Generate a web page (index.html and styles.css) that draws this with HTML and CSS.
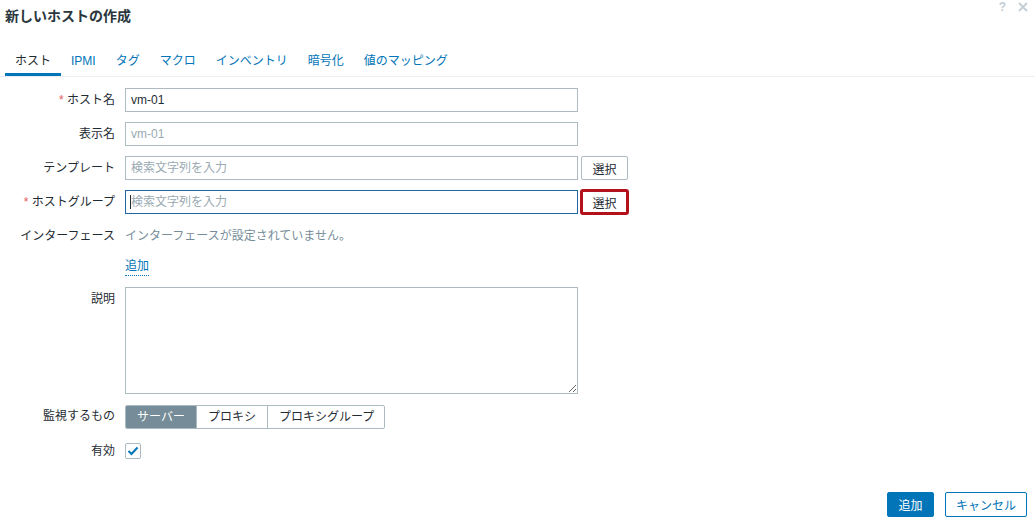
FILE: index.html
```html
<!DOCTYPE html>
<html>
<head>
    <meta charset="UTF-8">
    <title>新しいホストの作成</title>
    <link rel="stylesheet" href="styles.css">
</head>
<body>
<div class="dialog">
    <div class="dialog-head">
        <h4>新しいホストの作成</h4>
        <div class="head-icons">
            <span class="help">?</span>
            <span class="close">
                <svg width="10" height="10" viewBox="0 0 10 10"><path d="M1 1L9 9M9 1L1 9" stroke="#c3ced4" stroke-width="1.8"/></svg>
            </span>
        </div>
    </div>

    <ul class="tabs">
        <li class="active">ホスト</li>
        <li>IPMI</li>
        <li>タグ</li>
        <li>マクロ</li>
        <li>インベントリ</li>
        <li>暗号化</li>
        <li>値のマッピング</li>
    </ul>

    <div class="form">
        <label class="req">ホスト名</label>
        <div class="field"><input class="text" type="text" value="vm-01"></div>

        <label>表示名</label>
        <div class="field"><input class="text" type="text" placeholder="vm-01"></div>

        <label>テンプレート</label>
        <div class="field">
            <input class="text" type="text" placeholder="検索文字列を入力">
            <button class="btn-alt">選択</button>
        </div>

        <label class="req">ホストグループ</label>
        <div class="field">
            <div class="caret-wrap">
                <input class="text focus" type="text" placeholder="検索文字列を入力">
                <span class="caret"></span>
            </div>
            <button class="btn-alt marked">選択</button>
        </div>

        <label>インターフェース</label>
        <div class="field"><span class="muted">インターフェースが設定されていません。</span></div>

        <span></span>
        <div class="field link-row"><a class="link">追加</a></div>

        <label>説明</label>
        <div class="field"><textarea class="area"></textarea></div>

        <label>監視するもの</label>
        <div class="field">
            <div class="segments">
                <span class="seg on">サーバー</span>
                <span class="seg">プロキシ</span>
                <span class="seg">プロキシグループ</span>
            </div>
        </div>

        <label>有効</label>
        <div class="field">
            <span class="check">
                <svg width="12" height="10" viewBox="0 0 12 10"><path d="M1.5 5L4.5 8L10.5 1.5" fill="none" stroke="#0275b8" stroke-width="2"/></svg>
            </span>
        </div>
    </div>

    <div class="footer">
        <button class="btn-main">追加</button>
        <button class="btn-cancel">キャンセル</button>
    </div>
</div>
</body>
</html>
```

FILE: styles.css
```css
body {
    margin: 0;
    background: #fff;
    color: #1f2c33;
    font-family: Arial, "Liberation Sans", "Noto Sans CJK JP", sans-serif;
    font-size: 12px;
}
.dialog {
    width: 1034px;
    height: 521px;
    position: relative;
    box-sizing: border-box;
}
.dialog-head {
    display: flex;
    justify-content: space-between;
    padding: 0 5px;
}
.dialog-head h4 {
    margin: 0;
    padding-top: 8px;
    font-size: 14px;
    font-weight: bold;
    line-height: 17px;
    color: #2b373d;
}
.head-icons {
    display: flex;
    gap: 12px;
    padding-top: 1px;
    padding-right: 1px;
    color: #c3ced4;
    font-size: 12px;
    line-height: 12px;
}
.help {
    font-weight: bold;
}
.close {
    padding-top: 1px;
}
.tabs {
    list-style: none;
    margin: 26px 0 0;
    padding: 0 5px;
    display: flex;
    border-bottom: 1px solid #ebeef0;
    height: 25px;
}
.tabs li {
    padding: 0 10px;
    color: #0275b8;
    line-height: 20px;
    font-size: 12px;
}
.tabs li.active {
    color: #1f2c33;
    border-bottom: 3px solid #0275b8;
    height: 22px;
}
.form {
    display: grid;
    grid-template-columns: 115px 1fr;
    column-gap: 10px;
    row-gap: 10px;
    padding-top: 11px;
}
.form label {
    text-align: right;
    line-height: 24px;
    white-space: nowrap;
}
.form label.req::before {
    content: "* ";
    color: #e45959;
}
.field {
    display: flex;
    align-items: flex-start;
    gap: 3px;
    min-height: 24px;
    line-height: 24px;
}
.text {
    width: 453px;
    height: 24px;
    box-sizing: border-box;
    border: 1px solid #acbbc2;
    border-radius: 0;
    padding: 0 5px;
    font-family: Arial, "Liberation Sans", "Noto Sans CJK JP", sans-serif;
    font-size: 12px;
    color: #1f2c33;
    margin: 0;
    outline: none;
}
.text::placeholder {
    color: #9aaab2;
}
.text.focus {
    border-color: #1f65a6;
}
.caret-wrap {
    position: relative;
    height: 24px;
}
.caret {
    position: absolute;
    left: 5px;
    top: 5px;
    width: 1px;
    height: 14px;
    background: #1f2c33;
}
.btn-alt {
    height: 24px;
    width: 47px;
    box-sizing: border-box;
    background: #fff;
    border: 1px solid #acbbc2;
    border-radius: 2px;
    color: #1f2c33;
    font-family: Arial, "Liberation Sans", "Noto Sans CJK JP", sans-serif;
    font-size: 12px;
    padding: 0;
    margin: 0;
}
.btn-alt.marked {
    border-color: #fff;
    outline: 3px solid #b3121c;
    outline-offset: -2px;
}
.muted {
    color: #768d99;
}
.link-row {
    min-height: 19px;
    line-height: 16px;
}
.link {
    color: #0275b8;
    border-bottom: 1px dotted #0275b8;
    padding-bottom: 1px;
    cursor: pointer;
}
.area {
    width: 453px;
    height: 107px;
    box-sizing: border-box;
    border: 1px solid #acbbc2;
    margin: 0;
    resize: both;
}
.segments {
    display: flex;
    border: 1px solid #acbbc2;
    border-radius: 2px;
    height: 22px;
    margin-top: 1px;
    line-height: 22px;
    overflow: hidden;
}
.seg {
    padding: 0 11px;
    border-left: 1px solid #acbbc2;
    color: #1f2c33;
}
.seg:first-child {
    border-left: none;
}
.seg:last-child {
    padding-right: 10px;
}
.seg.on {
    background: #768d99;
    color: #fff;
}
.check {
    width: 16px;
    height: 16px;
    box-sizing: border-box;
    border: 1px solid #acbbc2;
    border-radius: 2px;
    margin-top: 4px;
    display: flex;
    align-items: center;
    justify-content: center;
}
.footer {
    position: absolute;
    right: 7px;
    bottom: 4px;
    display: flex;
    gap: 11px;
}
.footer button {
    height: 25px;
    box-sizing: border-box;
    border-radius: 2px;
    font-family: Arial, "Liberation Sans", "Noto Sans CJK JP", sans-serif;
    font-size: 12px;
    padding: 0;
}
.btn-main {
    width: 47px;
    background: #0275b8;
    border: 1px solid #0275b8;
    color: #fff;
}
.btn-cancel {
    width: 82px;
    background: #fff;
    border: 1px solid #0275b8;
    color: #0275b8;
}
```
